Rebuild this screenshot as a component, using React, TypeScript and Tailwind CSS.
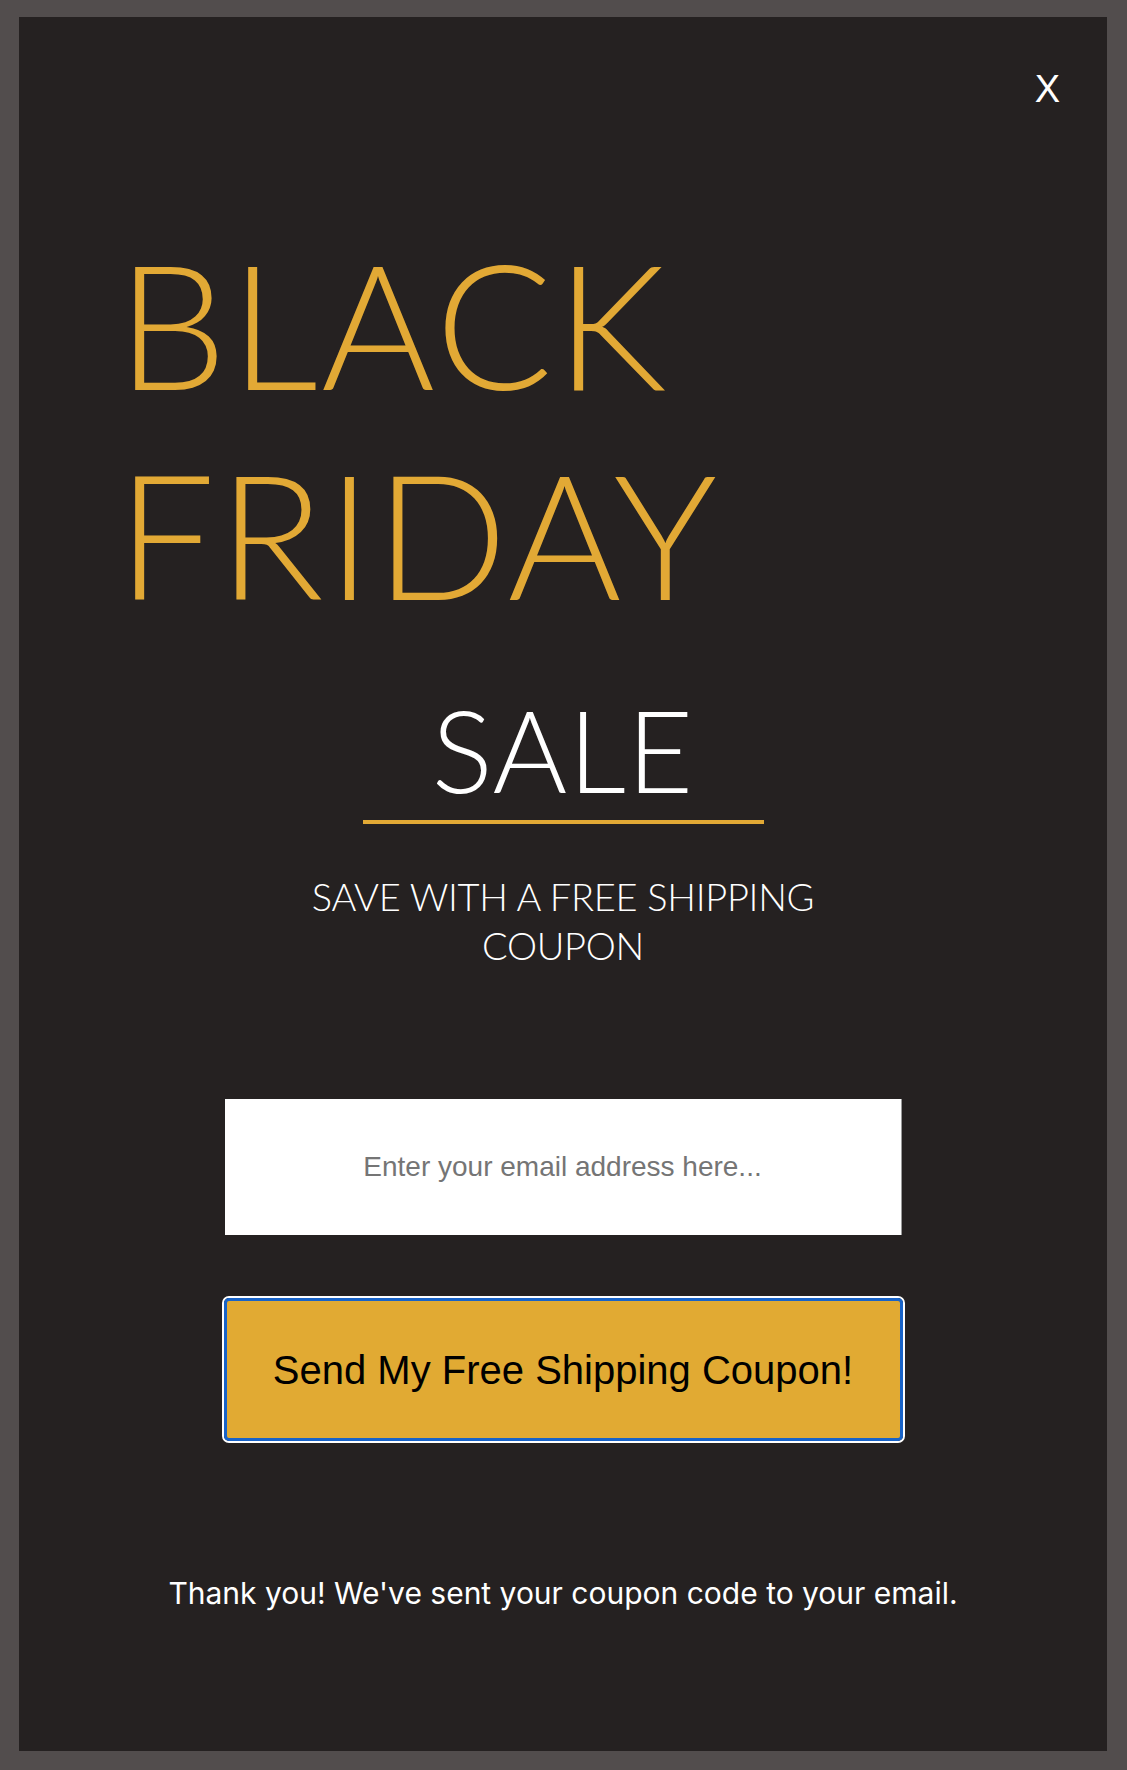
import { useState } from 'react'

export default function App() {
  const [email, setEmail] = useState('')

  return (
    <div className="min-h-[1770px] w-full bg-[#524d4d] pt-[17px] pb-[19px] pl-[19px] pr-[20px]">
      <div className="flex h-[1734px] flex-col bg-[#252121]">
        {/* close */}
        <div className="flex justify-end pt-[53px] pr-[47px]">
          <button className="h-[38px] text-[38px] leading-[38px] text-white font-['Liberation_Sans',Arial,sans-serif]">
            X
          </button>
        </div>

        {/* headline */}
        <h1 className="mt-[110px] pl-[98px] text-[174px] leading-[210px] font-light tracking-[3px] text-[#e2a935] font-['Lato',sans-serif]">
          BLACK
          <br />
          FRIDAY
        </h1>

        <div className="mt-[42px] flex flex-col items-center">
          <div className="text-[114px] leading-[137px] font-light tracking-[1px] text-white font-['Lato',sans-serif]">SALE</div>
          <div className="mt-[3px] h-[4px] w-[401px] bg-[#e2a935]" />
          <p className="mt-[48px] w-[600px] text-center text-[38px] leading-[49px] font-light tracking-[-0.3px] text-white font-['Lato',sans-serif]">
            SAVE WITH A FREE SHIPPING COUPON
          </p>

          <input
            type="email"
            value={email}
            onChange={(e) => setEmail(e.target.value)}
            placeholder="Enter your email address here..."
            className="mt-[129px] h-[136px] w-[677px] border-r border-[#9a9a9a] bg-white text-center text-[28px] text-[#333] placeholder:text-[#757575] outline-none font-['Liberation_Sans',Arial,sans-serif]"
          />

          <button className="mt-[61px] h-[147px] w-[683px] rounded-[7px] border-[2px] border-white p-0">
            <span className="flex h-full w-full items-center justify-center rounded-[5px] border-[3px] border-[#1863c8] bg-[#e1aa33] text-[40px] text-black font-['Liberation_Sans',Arial,sans-serif]">
              Send My Free Shipping Coupon!
            </span>
          </button>

          <p className="mt-[132px] text-[30px] leading-[36px] text-white font-['Inter',sans-serif]">
            Thank you! We've sent your coupon code to your email.
          </p>
        </div>
      </div>
    </div>
  )
}
